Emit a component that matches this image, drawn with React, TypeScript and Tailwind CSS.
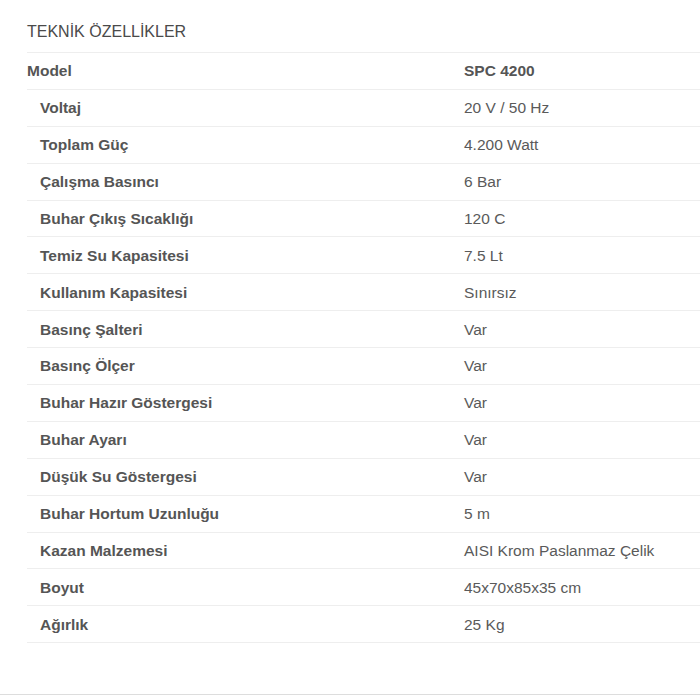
const rows: [string, string][] = [
  ["Voltaj", "20 V / 50 Hz"],
  ["Toplam Güç", "4.200 Watt"],
  ["Çalışma Basıncı", "6 Bar"],
  ["Buhar Çıkış Sıcaklığı", "120 C"],
  ["Temiz Su Kapasitesi", "7.5 Lt"],
  ["Kullanım Kapasitesi", "Sınırsız"],
  ["Basınç Şalteri", "Var"],
  ["Basınç Ölçer", "Var"],
  ["Buhar Hazır Göstergesi", "Var"],
  ["Buhar Ayarı", "Var"],
  ["Düşük Su Göstergesi", "Var"],
  ["Buhar Hortum Uzunluğu", "5 m"],
  ["Kazan Malzemesi", "AISI Krom Paslanmaz Çelik"],
  ["Boyut", "45x70x85x35 cm"],
  ["Ağırlık", "25 Kg"],
];

export default function App() {
  return (
    <div className="w-[700px] h-[700px] bg-white overflow-hidden font-['Liberation_Sans',Arial,sans-serif] text-[#555]">
      <div className="h-[695px] border-b border-[#ddd]">
        <div className="pl-[27px]">
          <div className="h-[53px] border-b border-[#eee] flex items-center pt-[12px] text-[16px] text-[#4a4a4a]">
            TEKNİK ÖZELLİKLER
          </div>
          <div className="flex h-[36.9px] items-center border-b border-[#eee] text-[15.5px]">
            <div className="w-[437px] font-bold">Model</div>
            <div className="font-bold">SPC 4200</div>
          </div>
          {rows.map(([label, value]) => (
            <div
              key={label}
              className="flex h-[36.9px] items-center border-b border-[#eee] text-[15.5px]"
            >
              <div className="w-[437px] pl-[13px] font-bold">{label}</div>
              <div className="text-[#5a5a5a]">{value}</div>
            </div>
          ))}
        </div>
      </div>
    </div>
  );
}
